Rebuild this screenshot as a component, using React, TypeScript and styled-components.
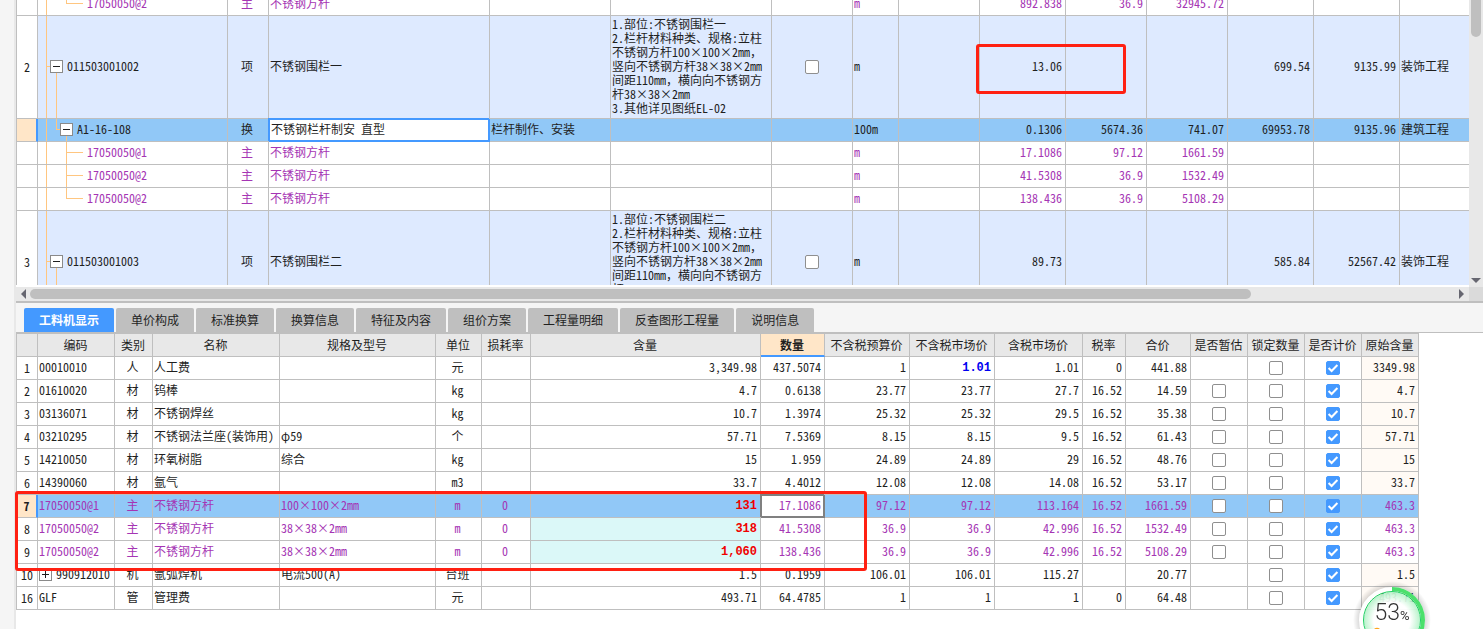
import React from "react";
import styled, { createGlobalStyle, css } from "styled-components";

const line = "#bfbfbf";
const blue = "#4499ff";
const selected = "#91c8f7";
const peach = "#ffe6c8";
const guide = "#ffc680";
const purple = "#a535b4";
const track = "#e8e8e8";

const GlobalStyle = createGlobalStyle`
  *, *::before, *::after { box-sizing: border-box; }
  body {
    margin: 0;
    overflow: hidden;
    background: #f5f5f5;
    color: #1f1f1f;
    font-family: "Noto Sans CJK SC", "Liberation Sans", sans-serif;
    font-size: 12px;
    line-height: 14px;
    font-feature-settings: "hwid" 1;
  }
  button, input {
    font: inherit;
    font-feature-settings: inherit;
    color: inherit;
  }
`;

const Page = styled.div`
  display: flex;
  flex-direction: column;
  min-height: 100vh;
  margin-left: 14px;
  border-left: 2px solid ${track};
`;

/* ---------- shared grid parts ---------- */

const Grid = styled.table<{ $width?: number }>`
  width: ${(p) => (p.$width ? `${p.$width}px` : "100%")};
  table-layout: fixed;
  border-collapse: separate;
  border-spacing: 0;
`;

type Align = "left" | "center" | "right";

const cellBox = css`
  padding: 0 3px 2px 1px;
  border-right: 1px solid ${line};
  border-bottom: 1px solid ${line};
  white-space: nowrap;
  &:first-child {
    border-left: 1px solid ${line};
  }
`;

const Row = styled.tr<{ $bg?: string; $color?: string; $tall?: boolean }>`
  height: ${(p) => (p.$tall ? 103 : 23)}px;
  background: ${(p) => p.$bg ?? "#fff"};
  color: ${(p) => p.$color ?? "inherit"};
`;

const HeadRow = styled.tr`
  height: 24px;
`;

const Cell = styled.td<{ $align?: Align; $bg?: string; $open?: boolean }>`
  ${cellBox}
  text-align: ${(p) => p.$align ?? "left"};
  ${(p) => p.$bg && `background: ${p.$bg};`}
  ${(p) => p.$open && "border-right: 0;"}
`;

const TickCell = styled.td`
  ${cellBox}
  padding: 0 2px 2px;
  text-align: center;
`;

const NumberCell = styled.th<{ $current?: boolean }>`
  ${cellBox}
  padding: 0 2px;
  background: #fff;
  color: #1f1f1f;
  font-weight: 400;
  text-align: center;
  ${(p) =>
    p.$current &&
    css`
      background: ${peach};
      border-right: 2px solid ${blue};
      font-weight: 700;
    `}
`;

const HeadCell = styled.th<{ $current?: boolean }>`
  ${cellBox}
  padding: 0 1px 0 0;
  border-top: 1px solid ${line};
  background: ${track};
  font-weight: 400;
  ${(p) =>
    p.$current &&
    css`
      background: ${peach};
      border-bottom: 2px solid ${blue};
      font-weight: 700;
    `}
`;

const FocusCell = styled(Cell)<{ $ring: string }>`
  background: #fff;
  border-color: ${(p) => p.$ring};
  box-shadow:
    -1px -1px ${(p) => p.$ring},
    inset 1px 1px ${(p) => p.$ring},
    inset -1px -1px ${(p) => p.$ring};
`;

const CellInput = styled.input`
  display: block;
  width: 100%;
  padding: 0 1px;
  border: 0;
  outline: 0;
  background: transparent;
`;

const Strong = styled.strong<{ $color: string }>`
  color: ${(p) => p.$color};
  font: 700 12px/14px "Liberation Mono", monospace;
`;

const Features = styled.div`
  white-space: pre;
`;

const Wide = styled.span`
  font-feature-settings: "fwid" 1;
`;

/* Latin runs are half width; the comma and the diameter sign take a full square. */
function CellText({ text }: { text?: string }) {
  if (!text) return null;
  return (
    <>
      {text.split(/([，φ])/).map((run, i) => (i % 2 ? <Wide key={i}>{run}</Wide> : run))}
    </>
  );
}

/* ---------- tick box ---------- */

const TickLabel = styled.label`
  display: inline-grid;
  vertical-align: middle;
  > * {
    grid-area: 1 / 1;
  }
`;

const TickInput = styled.input`
  appearance: none;
  width: 14px;
  height: 14px;
  margin: 0;
  border: 1px solid #8f8f8f;
  border-radius: 2px;
  background: #fff;
  &:checked {
    border-color: ${blue};
    background: ${blue};
  }
`;

const TickMark = styled.svg`
  width: 14px;
  height: 14px;
  pointer-events: none;
`;

function Tick({ label, checked = false }: { label: string; checked?: boolean }) {
  return (
    <TickLabel>
      <TickInput type="checkbox" defaultChecked={checked} aria-label={label} />
      {checked && (
        <TickMark viewBox="0 0 14 14" fill="none" stroke="#fff" strokeWidth="2">
          <path d="M2.6 7l3 3 5.8-6" />
        </TickMark>
      )}
    </TickLabel>
  );
}

/* ---------- tree column ---------- */

const Toggle = styled.button`
  flex: none;
  display: grid;
  place-items: center;
  width: 13px;
  height: 13px;
  padding: 0;
  border: 1px solid #8a8a8a;
  background: #fff;
`;

function Expander({ open }: { open: boolean }) {
  return (
    <Toggle aria-label={open ? "折叠" : "展开"}>
      <svg width="11" height="11" viewBox="0 0 11 11" stroke="#1f1f1f">
        <path d={open ? "M2 5.5h7" : "M2 5.5h7M5.5 2v7"} />
      </svg>
    </Toggle>
  );
}

type Level = "item" | "quota" | "part" | "lastPart";

const ink = `linear-gradient(${guide}, ${guide})`;
const middle = "calc(50% - 1px)";
const guides: Record<Level, string> = {
  item: `${ink} 8px 0 / 1px 100%, ${ink} 8px ${middle} / 4px 1px, ${ink} 18px 100% / 1px 50%`,
  quota: `${ink} 8px 0 / 1px 100%, ${ink} 18px 0 / 1px 50%, ${ink} 18px ${middle} / 4px 1px, ${ink} 28px 100% / 1px 50%`,
  part: `${ink} 8px 0 / 1px 100%, ${ink} 28px 0 / 1px 100%, ${ink} 28px ${middle} / 17px 1px`,
  lastPart: `${ink} 8px 0 / 1px 100%, ${ink} 28px 0 / 1px ${middle}, ${ink} 28px ${middle} / 17px 1px`,
};
const indents: Record<Level, number> = { item: 12, quota: 22, part: 49, lastPart: 49 };

const TreeCell = styled(Cell)<{ $level: Level }>`
  padding-left: ${(p) => indents[p.$level]}px;
  background: ${(p) => guides[p.$level]};
  background-repeat: no-repeat;
`;

const TreeLabel = styled.div`
  display: flex;
  align-items: center;
  gap: 4px;
`;

/* ---------- upper grid ---------- */

const UpperPane = styled.section`
  position: relative;
  display: grid;
  grid-template-columns: minmax(0, 1fr) 14px;
  grid-template-rows: 287px 14px;
  border-bottom: 2px solid ${line};
`;

const Viewport = styled.div`
  overflow: hidden;
  border-bottom: 2px solid #fff;
`;

const Scrolled = styled.div`
  margin-top: -7px;
`;

const VTrack = styled.div`
  display: flex;
  flex-direction: column;
  justify-content: space-between;
  align-items: center;
  padding-bottom: 4px;
  background: ${track};
`;

const VThumb = styled.div`
  width: 10px;
  height: 37px;
  border-radius: 0 0 5px 5px;
  background: ${line};
`;

const HTrack = styled.div`
  display: flex;
  align-items: center;
  gap: 4px;
  padding: 0 5px;
  background: ${track};
`;

const HRail = styled.div`
  flex: 1;
  display: grid;
  grid-template-columns: 6fr 1fr;
`;

const HThumb = styled.div`
  height: 10px;
  border-radius: 5px;
  background: ${line};
`;

const Corner = styled.div`
  background: #dadada;
`;

const MarkBox = styled.div<{ $top: number; $left: number; $width: number; $height: number }>`
  position: absolute;
  top: ${(p) => p.$top}px;
  left: ${(p) => p.$left}px;
  width: ${(p) => p.$width}px;
  height: ${(p) => p.$height}px;
  border: 3px solid #ff2012;
  border-radius: 3px;
  pointer-events: none;
`;

const upperWidths = [22, 190, 41, 221, 121, 161, 81, 46, 81, 86, 81, 81, 86, 86];

type UpperRow = {
  no?: string;
  level: Level;
  code: string;
  kind: string;
  name: string;
  spec?: string;
  features?: string;
  unit: string;
  values: string[];
  work?: string;
};

const featureText = (title: string) =>
  [
    `1.部位:不锈钢围栏${title}`,
    "2.栏杆材料种类、规格:立柱",
    "不锈钢方杆100×100×2mm，",
    "竖向不锈钢方杆38×38×2mm",
    "间距110mm，横向向不锈钢方",
    "杆38×38×2mm",
    "3.其他详见图纸EL-02",
  ].join("\n");

const part = (code: string, values: string[], last = false): UpperRow => ({
  level: last ? "lastPart" : "part",
  code,
  kind: "主",
  name: "不锈钢方杆",
  unit: "m",
  values: [...values, "", ""],
});

const upperRows: UpperRow[] = [
  part("17050050@2", ["892.838", "36.9", "32945.72"], true),
  {
    no: "2", level: "item", code: "011503001002", kind: "项", name: "不锈钢围栏一",
    features: featureText("一"), unit: "m", values: ["13.06", "", "", "699.54", "9135.99"], work: "装饰工程",
  },
  {
    level: "quota", code: "A1-16-108", kind: "换", name: "不锈钢栏杆制安 直型", spec: "栏杆制作、安装",
    unit: "100m", values: ["0.1306", "5674.36", "741.07", "69953.78", "9135.96"], work: "建筑工程",
  },
  part("17050050@1", ["17.1086", "97.12", "1661.59"]),
  part("17050050@2", ["41.5308", "36.9", "1532.49"]),
  part("17050050@2", ["138.436", "36.9", "5108.29"], true),
  {
    no: "3", level: "item", code: "011503001003", kind: "项", name: "不锈钢围栏二",
    features: featureText("二"), unit: "m", values: ["89.73", "", "", "585.84", "52567.42"], work: "装饰工程",
  },
];

function UpperLine({ row }: { row: UpperRow }) {
  const item = row.level === "item";
  const quota = row.level === "quota";
  return (
    <Row
      $tall={item}
      $bg={item ? "#deeaff" : quota ? selected : undefined}
      $color={item || quota ? undefined : purple}
    >
      <NumberCell scope="row" $current={quota}>{row.no}</NumberCell>
      <TreeCell $level={row.level}>
        <TreeLabel>
          {(item || quota) && <Expander open />}
          {row.code}
        </TreeLabel>
      </TreeCell>
      <Cell $align="center">{row.kind}</Cell>
      {quota ? (
        <FocusCell $ring={blue}>
          <CellInput defaultValue={row.name} aria-label="名称" />
        </FocusCell>
      ) : (
        <Cell>{row.name}</Cell>
      )}
      <Cell>{row.spec}</Cell>
      <Cell><Features><CellText text={row.features} /></Features></Cell>
      <TickCell>{item && <Tick label={`${row.code} 锁定`} />}</TickCell>
      <Cell>{row.unit}</Cell>
      <Cell />
      {row.values.map((value, i) => (
        <Cell key={i} $align="right">{value}</Cell>
      ))}
      <Cell $open>{row.work}</Cell>
    </Row>
  );
}

/* ---------- lower panel ---------- */

const Tabs = styled.nav`
  display: flex;
  gap: 2px;
  padding: 5px 8px 0;
`;

const Tab = styled.button<{ $active?: boolean }>`
  height: 24px;
  padding: 0 15px;
  border: 0;
  border-radius: 2px 2px 0 0;
  background: ${(p) => (p.$active ? blue : line)};
  color: ${(p) => (p.$active ? "#fff" : "#1f1f1f")};
  font-weight: ${(p) => (p.$active ? 700 : 400)};
`;

const LowerPane = styled.section`
  position: relative;
  flex: 1;
  border-top: 1px solid ${line};
  background: #fff;
`;

const tabs = ["工料机显示", "单价构成", "标准换算", "换算信息", "特征及内容", "组价方案", "工程量明细", "反查图形工程量", "说明信息"];

const columns: [string, number][] = [
  ["", 22], ["编码", 77], ["类别", 38], ["名称", 127], ["规格及型号", 156], ["单位", 46],
  ["损耗率", 49], ["含量", 230], ["数量", 64], ["不含税预算价", 85], ["不含税市场价", 85],
  ["含税市场价", 88], ["税率", 43], ["合价", 65], ["是否暂估", 57], ["锁定数量", 57],
  ["是否计价", 57], ["原始含量", 57],
];
const lowerWidth = columns.reduce((sum, [, width]) => sum + width, 0);

/* no, code, kind, name, spec, unit, loss, content, quantity, budget, market, taxed, rate, total, original */
const lowerRows: string[][] = [
  ["1", "00010010", "人", "人工费", "", "元", "", "3,349.98", "437.5074", "1", "1.01", "1.01", "0", "441.88", "3349.98"],
  ["2", "01610020", "材", "钨棒", "", "kg", "", "4.7", "0.6138", "23.77", "23.77", "27.7", "16.52", "14.59", "4.7"],
  ["3", "03136071", "材", "不锈钢焊丝", "", "kg", "", "10.7", "1.3974", "25.32", "25.32", "29.5", "16.52", "35.38", "10.7"],
  ["4", "03210295", "材", "不锈钢法兰座(装饰用)", "φ59", "个", "", "57.71", "7.5369", "8.15", "8.15", "9.5", "16.52", "61.43", "57.71"],
  ["5", "14210050", "材", "环氧树脂", "综合", "kg", "", "15", "1.959", "24.89", "24.89", "29", "16.52", "48.76", "15"],
  ["6", "14390060", "材", "氩气", "", "m3", "", "33.7", "4.4012", "12.08", "12.08", "14.08", "16.52", "53.17", "33.7"],
  ["7", "17050050@1", "主", "不锈钢方杆", "100×100×2mm", "m", "0", "131", "17.1086", "97.12", "97.12", "113.164", "16.52", "1661.59", "463.3"],
  ["8", "17050050@2", "主", "不锈钢方杆", "38×38×2mm", "m", "0", "318", "41.5308", "36.9", "36.9", "42.996", "16.52", "1532.49", "463.3"],
  ["9", "17050050@2", "主", "不锈钢方杆", "38×38×2mm", "m", "0", "1,060", "138.436", "36.9", "36.9", "42.996", "16.52", "5108.29", "463.3"],
  ["10", "990912010", "机", "氩弧焊机", "电流500(A)", "台班", "", "1.5", "0.1959", "106.01", "106.01", "115.27", "", "20.77", "1.5"],
  ["16", "GLF", "管", "管理费", "", "元", "", "493.71", "64.4785", "1", "1", "1", "0", "64.48", "493.71"],
];

function LowerLine({ row }: { row: string[] }) {
  const [no, code, kind, name, spec, unit, loss, content, quantity, budget, market, taxed, rate, total, original] = row;
  const current = no === "7";
  const main = kind === "主";
  return (
    <Row $bg={current ? selected : undefined} $color={main ? purple : undefined}>
      <NumberCell scope="row" $current={current}>{no}</NumberCell>
      <Cell>
        {kind === "机" ? <TreeLabel><Expander open={false} />{code}</TreeLabel> : code}
      </Cell>
      <Cell $align="center">{kind}</Cell>
      <Cell>{name}</Cell>
      <Cell><CellText text={spec} /></Cell>
      <Cell $align="center">{unit}</Cell>
      <Cell $align="center">{loss}</Cell>
      <Cell $align="right" $bg={main && !current ? "#dbf8f8" : undefined}>
        {main ? <Strong $color="#f00000">{content}</Strong> : content}
      </Cell>
      {current ? (
        <FocusCell $ring="#808080" $align="right">{quantity}</FocusCell>
      ) : (
        <Cell $align="right">{quantity}</Cell>
      )}
      <Cell $align="right">{budget}</Cell>
      <Cell $align="right">{no === "1" ? <Strong $color="#0000f0">{market}</Strong> : market}</Cell>
      <Cell $align="right">{taxed}</Cell>
      <Cell $align="right">{rate}</Cell>
      <Cell $align="right">{total}</Cell>
      <TickCell>{(kind === "材" || main) && <Tick label={`${no} 是否暂估`} />}</TickCell>
      <TickCell><Tick label={`${no} 锁定数量`} /></TickCell>
      <TickCell><Tick label={`${no} 是否计价`} checked /></TickCell>
      <Cell $align="right" $bg={main ? undefined : "#fffaf5"}>{original}</Cell>
    </Row>
  );
}

/* ---------- floating progress ball ---------- */

const Ball = styled.div`
  position: fixed;
  right: 52px;
  bottom: -30px;
  display: grid;
  width: 78px;
  height: 78px;
  > * {
    grid-area: 1 / 1;
  }
`;

const BallText = styled.div`
  position: relative;
  justify-self: center;
  padding-top: 18px;
  color: #333;
  font: 300 23px/28px Roboto, "Liberation Sans", sans-serif;
  font-feature-settings: normal;
  small {
    font-size: 13px;
    font-weight: 400;
  }
`;

function ProgressBall() {
  return (
    <Ball>
      <svg width="78" height="78" viewBox="0 0 78 78" fill="none">
        <defs>
          <radialGradient id="glow">
            <stop offset="0.65" stopColor="#fff" stopOpacity="0.93" />
            <stop offset="1" stopColor="#b4f2c8" stopOpacity="0.93" />
          </radialGradient>
          <radialGradient id="shade">
            <stop offset="0.8" stopColor="#000" stopOpacity="0.18" />
            <stop offset="1" stopColor="#000" stopOpacity="0" />
          </radialGradient>
        </defs>
        <path d="M39 0a39 39 0 1 0 0 78a39 39 0 1 0 0-78M39 8a31 31 0 1 1 0 62a31 31 0 1 1 0-62" fill="url(#shade)" />
        <circle cx="39" cy="39" r="28" fill="url(#glow)" />
        <circle cx="39" cy="39" r="31" stroke="#fff" strokeWidth="4" />
        <path d="M39 8a31 31 0 0 1 0 62" stroke="#4be06c" strokeWidth="4" />
        <circle cx="39" cy="39" r="28.5" stroke="#1fcf62" />
        <circle cx="24" cy="50" r="2.5" stroke="#ffa41c" strokeWidth="1.5" />
      </svg>
      <BallText>53<small>%</small></BallText>
    </Ball>
  );
}

export default function App() {
  return (
    <>
      <GlobalStyle />
      <Page>
        <UpperPane>
          <Viewport>
            <Scrolled>
              <Grid>
                <colgroup>
                  {upperWidths.map((width, i) => <col key={i} style={{ width }} />)}
                  <col />
                </colgroup>
                <tbody>
                  {upperRows.map((row, i) => <UpperLine key={i} row={row} />)}
                </tbody>
              </Grid>
            </Scrolled>
          </Viewport>
          <VTrack>
            <VThumb />
            <svg width="10" height="5" viewBox="0 0 10 5"><path d="M0 0h10L5 5z" fill="#666670" /></svg>
          </VTrack>
          <HTrack>
            <svg width="5" height="10" viewBox="0 0 5 10"><path d="M5 0v10L0 5z" fill="#666670" /></svg>
            <HRail><HThumb /></HRail>
            <svg width="5" height="10" viewBox="0 0 5 10"><path d="M0 0v10l5-5z" fill="#666670" /></svg>
          </HTrack>
          <Corner />
          <MarkBox $top={44} $left={960} $width={150} $height={50} />
        </UpperPane>
        <Tabs>
          {tabs.map((tab, i) => <Tab key={tab} $active={i === 0}>{tab}</Tab>)}
        </Tabs>
        <LowerPane>
          <Grid $width={lowerWidth}>
            <colgroup>
              {columns.map(([, width], i) => <col key={i} style={{ width }} />)}
            </colgroup>
            <thead>
              <HeadRow>
                {columns.map(([title], i) => (
                  <HeadCell key={i} scope="col" $current={title === "数量"}>{title}</HeadCell>
                ))}
              </HeadRow>
            </thead>
            <tbody>
              {lowerRows.map((row) => <LowerLine key={row[0]} row={row} />)}
            </tbody>
          </Grid>
          <MarkBox $top={158} $left={-1} $width={852} $height={80} />
        </LowerPane>
      </Page>
      <ProgressBall />
    </>
  );
}
